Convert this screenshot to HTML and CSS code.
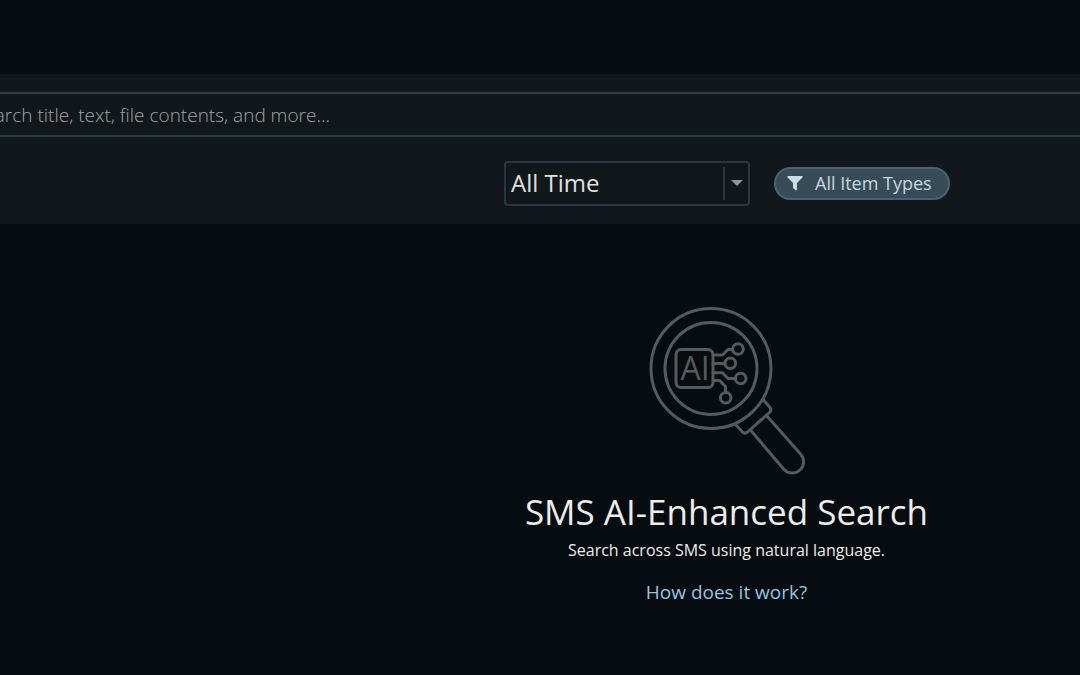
FILE: index.html
```html
<!DOCTYPE html>
<html lang="en">
<head>
    <meta charset="UTF-8">
    <meta name="viewport" content="width=device-width, initial-scale=1.0">
    <title>SMS AI-Enhanced Search</title>
    <link rel="stylesheet" href="styles.css">
</head>
<body>
    <header class="search-panel">
        <input class="search-input" type="search" aria-label="Search" placeholder="Search title, text, file contents, and more...">
        <div class="filters">
            <div class="time-filter">
                <select class="time-select" aria-label="Time range">
                    <option>All Time</option>
                    <option>Past Week</option>
                    <option>Past Month</option>
                </select>
                <svg class="time-arrow" viewBox="0 0 12 6" aria-hidden="true">
                    <path d="M0 0h12L6 6z"/>
                </svg>
            </div>
            <button class="type-button" type="button">
                <svg class="funnel-icon" viewBox="0 0 16 16" aria-hidden="true">
                    <path d="M1.2 1h13.6c.8 0 1.200.9.6 1.500L10 8v6.600c0 .7-.7 1-1.200.6l-2.300-1.800c-.3-.2-.5-.5-.5-.9V8L.6 2.500C0 1.900.4 1 1.200 1z"/>
                </svg>
                <span>All Item Types</span>
            </button>
        </div>
    </header>

    <main class="intro">
        <svg class="intro-icon" viewBox="0 0 174 180" aria-hidden="true">
            <!-- lens -->
            <circle cx="71" cy="68.500" r="60"/>
            <circle cx="71" cy="68.500" r="46"/>
            <!-- collar and handle -->
            <path d="M123.500 100l6.500 7.500q2 2.500-.5 5L107.500 132q-3 2.500-5.500-.5l-6.500-7"/>
            <path d="M126.500 115.500l34 38.500a11.200 11.200 0 0 1-16.500 15.500L110.500 130"/>
            <!-- chip -->
            <rect x="36" y="49.500" width="37" height="38" rx="5"/>
            <path d="M73 55h9.500l5.500-5.500h4.500M73 63.500h12M73 72.700h9.500l5.500 5.800h7M73 80.500h6.500l6 6V92"/>
            <circle cx="98" cy="49" r="5.300"/>
            <circle cx="90.300" cy="63.300" r="5.300"/>
            <circle cx="100.700" cy="78.500" r="5.300"/>
            <circle cx="85.700" cy="97.700" r="5.300"/>
            <text class="chip-label" x="55" y="80" text-anchor="middle">AI</text>
        </svg>
        <h1 class="intro-title">SMS AI-Enhanced Search</h1>
        <p class="intro-text">Search across SMS using natural language.</p>
        <a class="intro-link" href="#">How does it work?</a>
    </main>
</body>
</html>
```
FILE: styles.css
```css
* {
    box-sizing: border-box;
}

body {
    margin: 0;
    padding-top: 74px;
    min-height: 100vh;
    background-color: #060c0f;
    color: #ececec;
    font-family: "Open Sans", sans-serif;
    overflow-x: hidden;
}

.search-panel {
    padding: 18px 0;
    background-color: #11171a;
}

/* the search box runs past both edges of the window */
.search-input {
    display: block;
    width: calc(100% + 80px);
    height: 45px;
    margin: 0 -40px;
    padding: 0 12px;
    border: 2px solid #2a3f49;
    background: none;
    color: #e8e8e8;
    font-family: inherit;
    font-size: 19px;
    font-weight: 300;
    outline: none;
}

.search-input::placeholder {
    color: #a2a4a6;
    opacity: 1;
}

.filters {
    display: flex;
    align-items: center;
    gap: 24px;
    margin-top: 24px;
    padding-left: 504px;
}

.time-filter {
    position: relative;
    width: 246px;
}

.time-select {
    display: block;
    width: 100%;
    height: 45px;
    padding: 0 32px 2px 5px;
    border: 2px solid #263841;
    border-radius: 4px;
    background: linear-gradient(#263841, #263841) no-repeat right 23px center / 2px 33px;
    color: #e0e0e0;
    font-family: inherit;
    font-size: 24px;
    appearance: none;
}

.time-select option {
    background-color: #11171a;
}

.time-arrow {
    position: absolute;
    top: 19px;
    right: 7px;
    width: 12px;
    height: 6px;
    fill: #929496;
    pointer-events: none;
}

.type-button {
    display: flex;
    align-items: center;
    gap: 12px;
    height: 33px;
    padding: 0 16px 2px 11px;
    border: 2px solid #446475;
    border-radius: 17px;
    background-color: #384c58;
    color: #c5d8e2;
    font-family: inherit;
    font-size: 18px;
    cursor: pointer;
}

.funnel-icon {
    width: 16px;
    height: 16px;
    fill: #c5dfec;
}

.intro {
    display: flex;
    flex-direction: column;
    align-items: center;
    padding: 76px 0 48px 373px;
}

.intro-icon {
    width: 174px;
    height: 180px;
    fill: none;
    stroke: #58595b;
    stroke-width: 3;
    stroke-linecap: round;
    stroke-linejoin: round;
}

.chip-label {
    fill: #58595b;
    stroke: none;
    font-size: 32px;
}

.intro-title {
    margin: 8px 0 0;
    font-size: 35px;
    font-weight: 400;
    line-height: 48px;
}

.intro-text {
    margin: 0;
    font-size: 16px;
    line-height: 28px;
}

.intro-link {
    margin-top: 14px;
    color: #93c5e4;
    font-size: 19px;
    line-height: 28px;
    text-decoration: none;
}
```
